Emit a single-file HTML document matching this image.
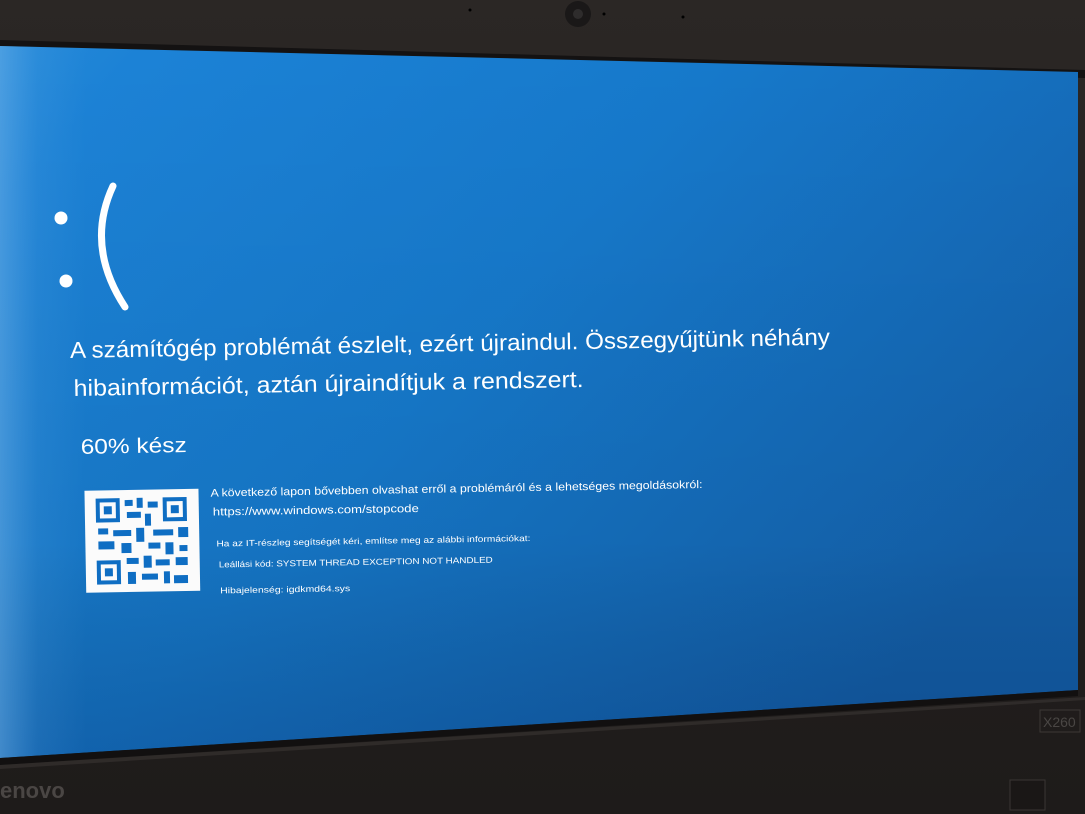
<!DOCTYPE html>
<html><head><meta charset="utf-8"><style>
html,body{margin:0;padding:0;background:#262321;width:1085px;height:814px;overflow:hidden}
svg{display:block}
text{font-family:"Liberation Sans","DejaVu Sans",sans-serif;fill:#fff}
</style></head><body>
<svg width="1085" height="814" viewBox="0 0 1085 814" xmlns="http://www.w3.org/2000/svg">
<defs>
<linearGradient id="bz" x1="0" y1="0" x2="0" y2="1">
<stop offset="0" stop-color="#2b2725"/><stop offset="1" stop-color="#1e1b1a"/>
</linearGradient>
<linearGradient id="scr" x1="0" y1="0" x2="1" y2="0.6">
<stop offset="0" stop-color="#2589d8"/><stop offset="0.1" stop-color="#1c82d6"/>
<stop offset="0.5" stop-color="#1679cb"/><stop offset="1" stop-color="#1462ad"/>
</linearGradient>
<linearGradient id="vshade" x1="0" y1="0" x2="0" y2="1">
<stop offset="0" stop-color="#000" stop-opacity="0"/><stop offset="0.7" stop-color="#000" stop-opacity="0.05"/><stop offset="1" stop-color="#001040" stop-opacity="0.22"/>
</linearGradient>
<linearGradient id="lglow" x1="0" y1="0" x2="1" y2="0">
<stop offset="0" stop-color="#7ab8ec" stop-opacity="0.45"/><stop offset="0.035" stop-color="#6ab0ea" stop-opacity="0.12"/><stop offset="0.08" stop-color="#6ab0ea" stop-opacity="0"/>
</linearGradient>
</defs>
<rect width="1085" height="814" fill="url(#bz)"/>
<polygon points="0,40 1085,70 1085,78 0,48" fill="#141212"/>
<polygon points="0,46 1078,72 1078,690 0,758" fill="url(#scr)"/>
<polygon points="0,46 1078,72 1078,690 0,758" fill="url(#vshade)"/>
<polygon points="0,46 1078,72 1078,690 0,758" fill="url(#lglow)"/>
<polygon points="0,758 1078,690 1078,696 0,765" fill="#121010"/>
<polygon points="0,765 1085,697 1085,700 0,769" fill="#3a3633" opacity="0.6"/>
<circle cx="578" cy="14" r="13" fill="#1a1818"/><circle cx="578" cy="14" r="5" fill="#2e2c2c"/>
<circle cx="470" cy="10" r="1.5" fill="#000"/><circle cx="683" cy="17" r="1.5" fill="#000"/><circle cx="604" cy="14" r="1.5" fill="#000"/>
<text x="0" y="798" font-size="22" style="fill:#4a4644" font-weight="bold">enovo</text>
<rect x="1040" y="710" width="40" height="22" fill="none" stroke="#3c3836"/>
<text x="1043" y="727" font-size="14" style="fill:#4a4644">X260</text>
<rect x="1010" y="780" width="35" height="30" fill="#1a1716" stroke="#3a3634"/>
<g fill="#fff">
<circle cx="61" cy="218" r="6.5"/><circle cx="66" cy="281" r="6.5"/>
<path d="M113,186 Q85,246 125,307" fill="none" stroke="#fff" stroke-width="7" stroke-linecap="round"/>
</g>
<g transform="rotate(-1.0 70 350)">
<text x="70" y="358" font-size="23" textLength="760" lengthAdjust="spacingAndGlyphs">A számítógép problémát észlelt, ezért újraindul. Összegyűjtünk néhány</text>
<text x="73" y="396" font-size="23" textLength="510" lengthAdjust="spacingAndGlyphs">hibainformációt, aztán újraindítjuk a rendszert.</text>
<text x="79" y="454" font-size="21" textLength="106" lengthAdjust="spacingAndGlyphs">60% kész</text>
<rect x="82" y="491" width="114" height="102" fill="#fbfbfb"/>
<g fill="#0f6ec3">
<rect x="93" y="499" width="24" height="24"/><rect x="160" y="499" width="24" height="24"/><rect x="93" y="561" width="24" height="24"/>
<rect x="122" y="501" width="8" height="6"/><rect x="134" y="499" width="6" height="10"/><rect x="145" y="503" width="10" height="6"/>
<rect x="124" y="513" width="14" height="6"/><rect x="142" y="515" width="6" height="12"/>
<rect x="95" y="529" width="10" height="6"/><rect x="110" y="531" width="18" height="6"/><rect x="133" y="529" width="8" height="14"/><rect x="150" y="531" width="20" height="6"/><rect x="175" y="529" width="10" height="10"/>
<rect x="95" y="542" width="16" height="8"/><rect x="118" y="544" width="10" height="10"/><rect x="145" y="544" width="12" height="6"/><rect x="162" y="544" width="8" height="12"/><rect x="176" y="547" width="8" height="6"/>
<rect x="123" y="559" width="12" height="6"/><rect x="140" y="557" width="8" height="12"/><rect x="152" y="561" width="14" height="6"/><rect x="172" y="559" width="12" height="8"/>
<rect x="124" y="573" width="8" height="12"/><rect x="138" y="575" width="16" height="6"/><rect x="160" y="573" width="6" height="12"/><rect x="170" y="577" width="14" height="8"/>
</g>
<g fill="#fbfbfb"><rect x="97" y="503" width="16" height="16"/><rect x="164" y="503" width="16" height="16"/><rect x="97" y="565" width="16" height="16"/></g>
<g fill="#0f6ec3"><rect x="101" y="507" width="8" height="8"/><rect x="168" y="507" width="8" height="8"/><rect x="101" y="569" width="8" height="8"/></g>
<text x="208" y="499" font-size="11" textLength="492" lengthAdjust="spacingAndGlyphs">A következő lapon bővebben olvashat erről a problémáról és a lehetséges megoldásokról:</text>
<text x="210" y="518" font-size="11" textLength="206" lengthAdjust="spacingAndGlyphs">https://www.windows.com/stopcode</text>
<text x="213" y="549" font-size="8.5" textLength="314" lengthAdjust="spacingAndGlyphs">Ha az IT-részleg segítségét kéri, említse meg az alábbi információkat:</text>
<text x="215" y="570" font-size="8.5" textLength="274" lengthAdjust="spacingAndGlyphs">Leállási kód: SYSTEM THREAD EXCEPTION NOT HANDLED</text>
<text x="216" y="596" font-size="8.5" textLength="130" lengthAdjust="spacingAndGlyphs">Hibajelenség: igdkmd64.sys</text>
</g>
</svg>
</body></html>
